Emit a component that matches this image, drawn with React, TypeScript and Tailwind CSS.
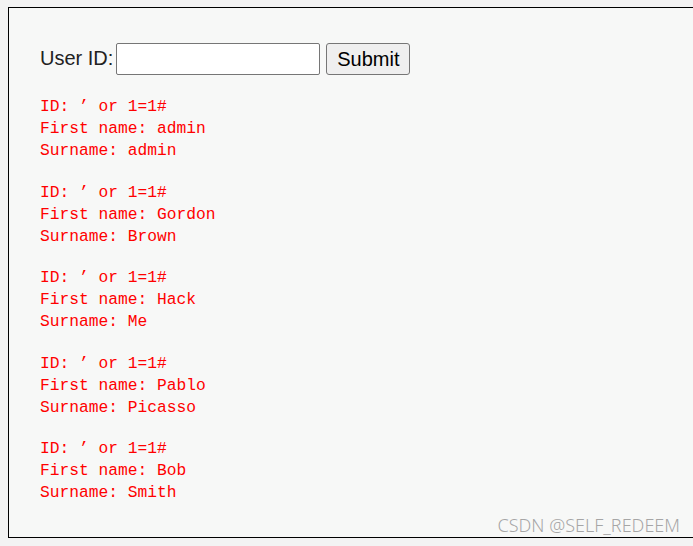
import React from "react";

const users = [
  ["admin", "admin"],
  ["Gordon", "Brown"],
  ["Hack", "Me"],
  ["Pablo", "Picasso"],
  ["Bob", "Smith"],
];

export default function App() {
  return (
    <div className="h-[546px] w-[693px] overflow-hidden bg-[#f3f3f3] pt-[7px] pl-[8px]">
      <div className="relative h-[531px] w-[685px] border border-r-0 border-black bg-[#f7f8f7] pl-[31px] pt-[35px]">
        <form
          className="flex items-center text-[20px] text-[#222]"
          style={{ fontFamily: '"Liberation Sans", Arial, sans-serif' }}
          onSubmit={(e) => e.preventDefault()}
        >
          <label className="mr-[3px] -mt-[2px]">User ID:</label>
          <input
            type="text"
            className="h-[32px] w-[204px] rounded-[2px] border border-[#767676] bg-white px-1"
          />
          <button className="ml-[6px] h-[32px] w-[84px] rounded-[3px] border border-[#767676] bg-[#efefef] text-black">
            Submit
          </button>
        </form>
        <div
          className="mt-[21px] flex flex-col gap-[19.5px] text-[16.25px] leading-[22px] text-[#ff0000]"
          style={{ fontFamily: '"Liberation Mono", "Courier New", monospace' }}
        >
          {users.map(([first, last]) => (
            <pre key={first} className="m-0 font-[inherit]">
              {"ID: ’ or 1=1#\nFirst name: " + first + "\nSurname: " + last}
            </pre>
          ))}
        </div>
        <div
          className="absolute right-[13px] bottom-0 text-[18px] leading-[24px] font-light text-[#a6a6a6] [text-shadow:0_0_1px_#fff]"
          style={{ fontFamily: '"Noto Sans", "Open Sans", sans-serif' }}
        >
          CSDN @SELF_REDEEM
        </div>
      </div>
    </div>
  );
}
